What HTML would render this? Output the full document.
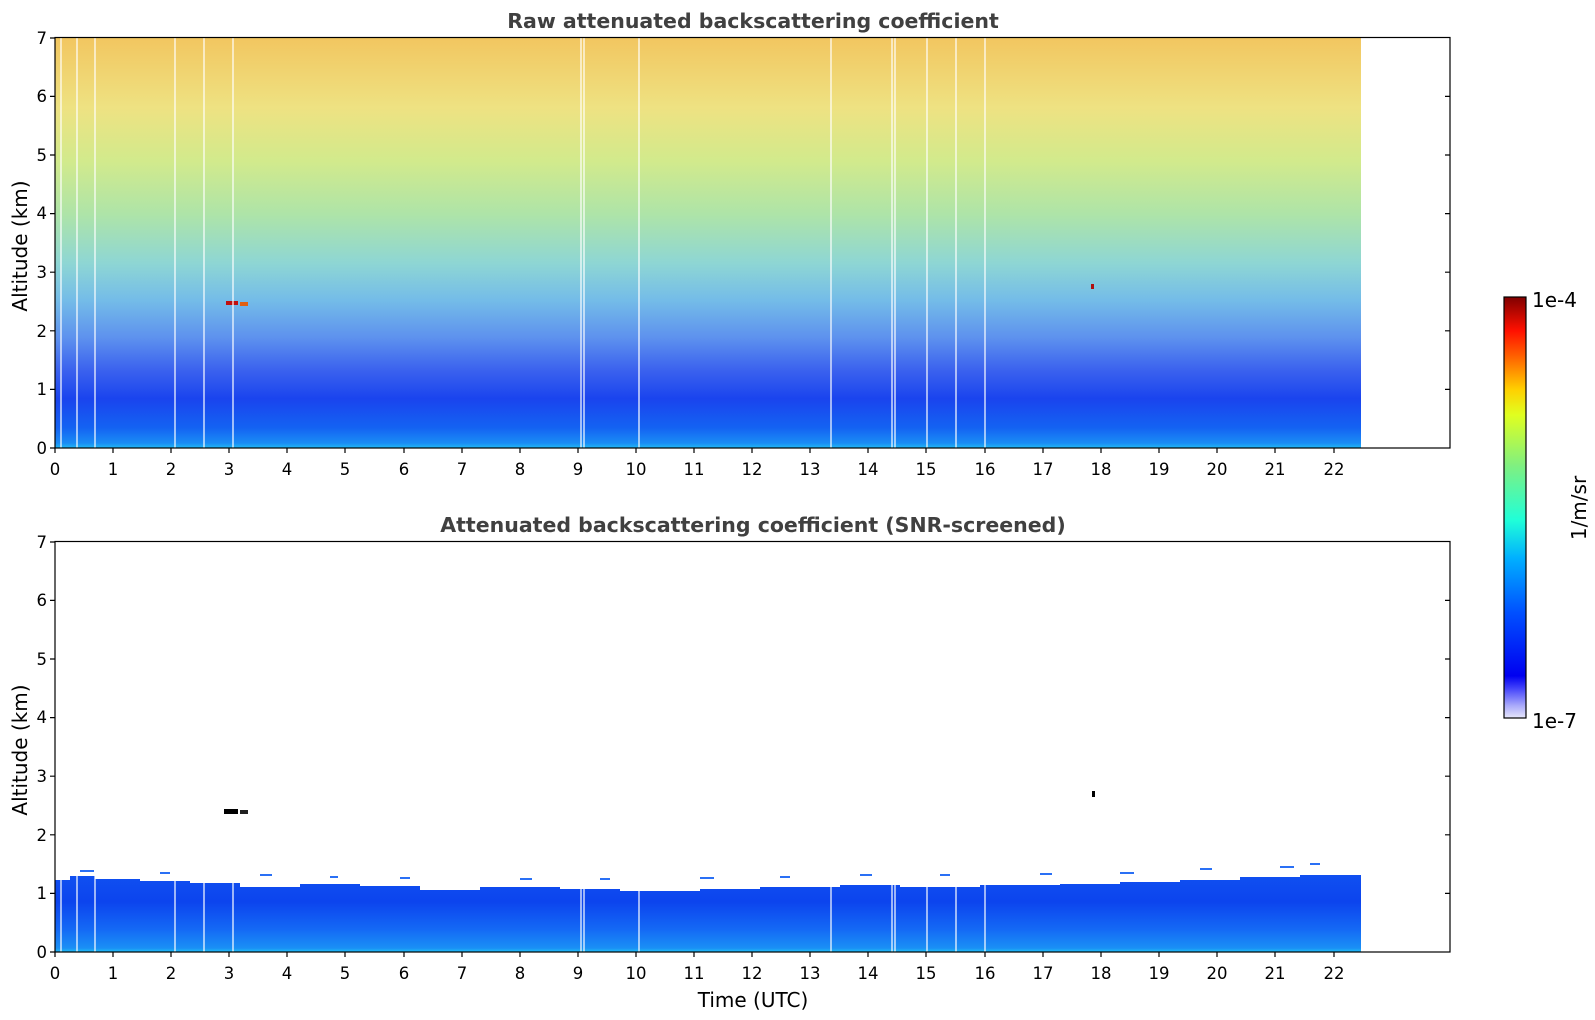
<!DOCTYPE html>
<html><head><meta charset="utf-8"><style>
html,body{margin:0;padding:0;background:#fff;}
svg{display:block;font-family:"DejaVu Sans","Liberation Sans",sans-serif;}
</style></head><body>
<svg width="1595" height="1020" viewBox="0 0 1595 1020" xmlns="http://www.w3.org/2000/svg">
<defs>
<linearGradient id="raw" x1="0" y1="1" x2="0" y2="0">
<stop offset="0" stop-color="#1fb8f5"/>
<stop offset="0.012" stop-color="#1a8cf5"/>
<stop offset="0.05" stop-color="#1462f2"/>
<stop offset="0.12" stop-color="#1a44ee"/>
<stop offset="0.19" stop-color="#3b62ee"/>
<stop offset="0.27" stop-color="#5e92ee"/>
<stop offset="0.36" stop-color="#74bce8"/>
<stop offset="0.45" stop-color="#8ed6d4"/>
<stop offset="0.57" stop-color="#aee4a8"/>
<stop offset="0.70" stop-color="#d2ea8c"/>
<stop offset="0.83" stop-color="#eee282"/>
<stop offset="1" stop-color="#f2c660"/>
</linearGradient>
<linearGradient id="snr" x1="0" y1="1" x2="0" y2="0">
<stop offset="0" stop-color="#1ec0f5"/>
<stop offset="0.05" stop-color="#1a90f5"/>
<stop offset="0.3" stop-color="#1468f5"/>
<stop offset="0.65" stop-color="#0c44ee"/>
<stop offset="1" stop-color="#1050f0"/>
</linearGradient>
<linearGradient id="cb" x1="0" y1="1" x2="0" y2="0">
<stop offset="0" stop-color="#e6e6fa"/>
<stop offset="0.03" stop-color="#a8a8fa"/>
<stop offset="0.07" stop-color="#4444fa"/>
<stop offset="0.1" stop-color="#0000f0"/>
<stop offset="0.25" stop-color="#0050ff"/>
<stop offset="0.38" stop-color="#00b0ff"/>
<stop offset="0.47" stop-color="#20ffd8"/>
<stop offset="0.6" stop-color="#80f080"/>
<stop offset="0.72" stop-color="#e0ff20"/>
<stop offset="0.78" stop-color="#ffd000"/>
<stop offset="0.86" stop-color="#ff6000"/>
<stop offset="0.92" stop-color="#ff1000"/>
<stop offset="1" stop-color="#800000"/>
</linearGradient>
</defs>

<text x="753" y="28" font-size="20.5" font-weight="bold" fill="#404040" text-anchor="middle">Raw attenuated backscattering coefficient</text>
<text x="753" y="532" font-size="20.5" font-weight="bold" fill="#404040" text-anchor="middle">Attenuated backscattering coefficient (SNR-screened)</text>

<rect x="55" y="38" width="1306" height="410" fill="url(#raw)"/>
<rect x="226" y="301" width="12" height="4" fill="#c01010"/>
<rect x="240" y="302" width="8" height="4" fill="#e06010"/>
<rect x="1091" y="284" width="3" height="5" fill="#b01010"/>

<path d="M55,952 L55,880 L70,880 L70,876 L95,876 L95,879 L140,879 L140,881 L190,881 L190,883 L240,883 L240,887 L300,887 L300,884 L360,884 L360,886 L420,886 L420,890 L480,890 L480,887 L560,887 L560,889 L620,889 L620,891 L700,891 L700,889 L760,889 L760,887 L840,887 L840,885 L900,885 L900,887 L980,887 L980,885 L1060,885 L1060,884 L1120,884 L1120,882 L1180,882 L1180,880 L1240,880 L1240,877 L1300,877 L1300,875 L1361,875 L1361,952 Z" fill="url(#snr)"/>
<g fill="#2a70f5">
<rect x="80" y="870" width="14" height="2"/><rect x="160" y="872" width="10" height="2"/><rect x="260" y="874" width="12" height="2"/><rect x="330" y="876" width="8" height="2"/><rect x="400" y="877" width="10" height="2"/><rect x="520" y="878" width="12" height="2"/><rect x="600" y="878" width="10" height="2"/><rect x="700" y="877" width="14" height="2"/><rect x="780" y="876" width="10" height="2"/><rect x="860" y="874" width="12" height="2"/><rect x="940" y="874" width="10" height="2"/><rect x="1040" y="873" width="12" height="2"/><rect x="1120" y="872" width="14" height="2"/><rect x="1200" y="868" width="12" height="2"/><rect x="1280" y="866" width="14" height="2"/><rect x="1310" y="863" width="10" height="2"/>
</g>
<rect x="224" y="809" width="14" height="5" fill="#000"/>
<rect x="240" y="810" width="8" height="4" fill="#202020"/>
<rect x="1092" y="791" width="3" height="6" fill="#000"/>

<g stroke="#fff" stroke-width="1.2">
<line x1="61" y1="38" x2="61" y2="448"/><line x1="77" y1="38" x2="77" y2="448"/><line x1="95" y1="38" x2="95" y2="448"/><line x1="175" y1="38" x2="175" y2="448"/><line x1="204" y1="38" x2="204" y2="448"/><line x1="233" y1="38" x2="233" y2="448"/><line x1="581" y1="38" x2="581" y2="448"/><line x1="584" y1="38" x2="584" y2="448"/><line x1="639" y1="38" x2="639" y2="448"/><line x1="831" y1="38" x2="831" y2="448"/><line x1="892" y1="38" x2="892" y2="448"/><line x1="895" y1="38" x2="895" y2="448"/><line x1="927" y1="38" x2="927" y2="448"/><line x1="956" y1="38" x2="956" y2="448"/><line x1="985" y1="38" x2="985" y2="448"/>
<line x1="61" y1="860" x2="61" y2="952"/><line x1="77" y1="860" x2="77" y2="952"/><line x1="95" y1="860" x2="95" y2="952"/><line x1="175" y1="860" x2="175" y2="952"/><line x1="204" y1="860" x2="204" y2="952"/><line x1="233" y1="860" x2="233" y2="952"/><line x1="581" y1="860" x2="581" y2="952"/><line x1="584" y1="860" x2="584" y2="952"/><line x1="639" y1="860" x2="639" y2="952"/><line x1="831" y1="860" x2="831" y2="952"/><line x1="892" y1="860" x2="892" y2="952"/><line x1="895" y1="860" x2="895" y2="952"/><line x1="927" y1="860" x2="927" y2="952"/><line x1="956" y1="860" x2="956" y2="952"/><line x1="985" y1="860" x2="985" y2="952"/>
</g>

<rect x="55" y="37.5" width="1395" height="410.5" fill="none" stroke="#000" stroke-width="1.2"/>
<rect x="55" y="541.5" width="1395" height="410.5" fill="none" stroke="#000" stroke-width="1.2"/>

<g stroke="#000" stroke-width="1.2">
<path d="M55,448v5M113,448v5M171,448v5M229,448v5M287,448v5M345,448v5M404,448v5M462,448v5M520,448v5M578,448v5M636,448v5M694,448v5M752,448v5M810,448v5M868,448v5M926,448v5M985,448v5M1043,448v5M1101,448v5M1159,448v5M1217,448v5M1275,448v5M1334,448v5"/>
<path d="M55,952v5M113,952v5M171,952v5M229,952v5M287,952v5M345,952v5M404,952v5M462,952v5M520,952v5M578,952v5M636,952v5M694,952v5M752,952v5M810,952v5M868,952v5M926,952v5M985,952v5M1043,952v5M1101,952v5M1159,952v5M1217,952v5M1275,952v5M1334,952v5"/>
<path d="M55,448h-5M55,389.4h-5M55,330.8h-5M55,272.2h-5M55,213.6h-5M55,155h-5M55,96.4h-5M55,38h-5"/>
<path d="M1450,389.4h-5M1450,330.8h-5M1450,272.2h-5M1450,213.6h-5M1450,155h-5M1450,96.4h-5"/>
<path d="M55,952h-5M55,893.4h-5M55,834.8h-5M55,776.2h-5M55,717.6h-5M55,659h-5M55,600.4h-5M55,542h-5"/>
<path d="M1450,893.4h-5M1450,834.8h-5M1450,776.2h-5M1450,717.6h-5M1450,659h-5M1450,600.4h-5"/>
</g>

<g font-size="16.5" fill="#000" text-anchor="end">
<text x="47" y="454">0</text><text x="47" y="395">1</text><text x="47" y="337">2</text><text x="47" y="278">3</text><text x="47" y="219">4</text><text x="47" y="161">5</text><text x="47" y="102">6</text><text x="47" y="44">7</text>
<text x="47" y="958">0</text><text x="47" y="899">1</text><text x="47" y="841">2</text><text x="47" y="782">3</text><text x="47" y="723">4</text><text x="47" y="665">5</text><text x="47" y="606">6</text><text x="47" y="548">7</text>
</g>
<g font-size="16.5" fill="#000" text-anchor="middle">
<text x="55" y="475">0</text><text x="113" y="475">1</text><text x="171" y="475">2</text><text x="229" y="475">3</text><text x="287" y="475">4</text><text x="345" y="475">5</text><text x="404" y="475">6</text><text x="462" y="475">7</text><text x="520" y="475">8</text><text x="578" y="475">9</text><text x="636" y="475">10</text><text x="694" y="475">11</text><text x="752" y="475">12</text><text x="810" y="475">13</text><text x="868" y="475">14</text><text x="926" y="475">15</text><text x="985" y="475">16</text><text x="1043" y="475">17</text><text x="1101" y="475">18</text><text x="1159" y="475">19</text><text x="1217" y="475">20</text><text x="1275" y="475">21</text><text x="1334" y="475">22</text>
<text x="55" y="979">0</text><text x="113" y="979">1</text><text x="171" y="979">2</text><text x="229" y="979">3</text><text x="287" y="979">4</text><text x="345" y="979">5</text><text x="404" y="979">6</text><text x="462" y="979">7</text><text x="520" y="979">8</text><text x="578" y="979">9</text><text x="636" y="979">10</text><text x="694" y="979">11</text><text x="752" y="979">12</text><text x="810" y="979">13</text><text x="868" y="979">14</text><text x="926" y="979">15</text><text x="985" y="979">16</text><text x="1043" y="979">17</text><text x="1101" y="979">18</text><text x="1159" y="979">19</text><text x="1217" y="979">20</text><text x="1275" y="979">21</text><text x="1334" y="979">22</text>
</g>

<text transform="translate(27,246) rotate(-90)" font-size="20" text-anchor="middle">Altitude (km)</text>
<text transform="translate(27,750) rotate(-90)" font-size="20" text-anchor="middle">Altitude (km)</text>
<text x="753" y="1007" font-size="20" text-anchor="middle">Time (UTC)</text>

<rect x="1504" y="297" width="22" height="421" fill="url(#cb)" stroke="#000" stroke-width="1.2"/>
<text x="1532" y="307" font-size="20">1e-4</text>
<text x="1532" y="728" font-size="20">1e-7</text>
<text transform="translate(1586,508) rotate(-90)" font-size="20" text-anchor="middle">1/m/sr</text>
</svg>
</body></html>
